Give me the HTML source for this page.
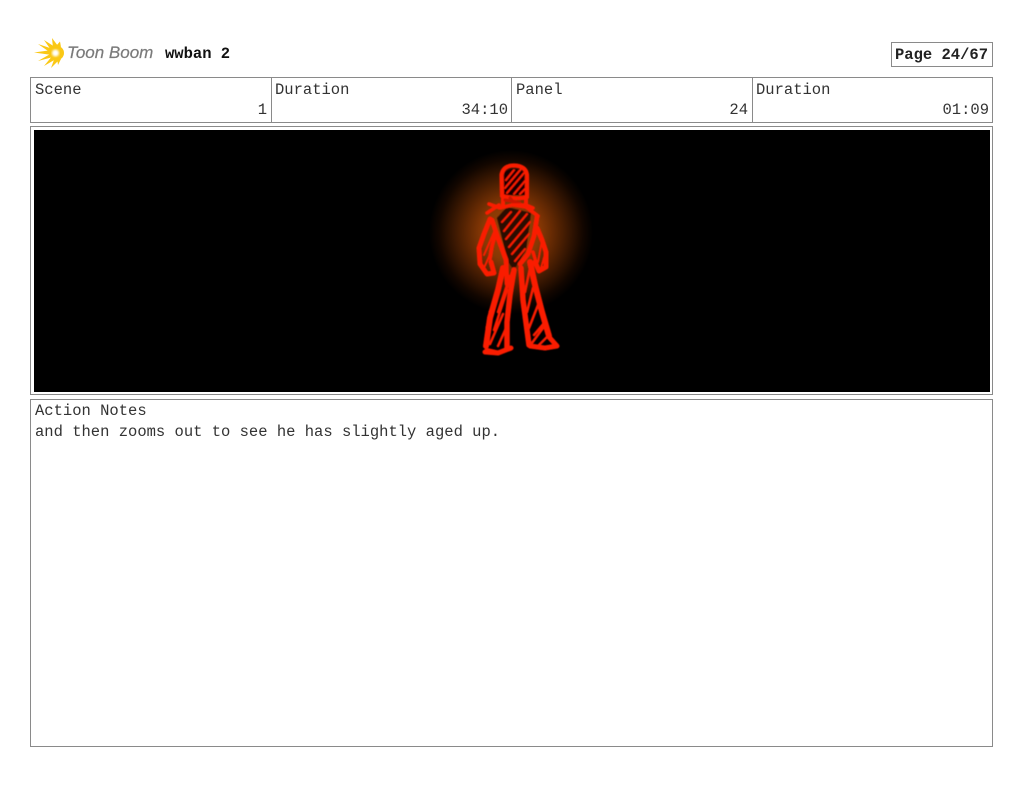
<!DOCTYPE html>
<html>
<head>
<meta charset="utf-8">
<style>
html,body{margin:0;padding:0;background:#fff;}
body{width:1024px;height:793px;position:relative;overflow:hidden;font-family:"Liberation Mono",monospace;color:#333;}
.b{position:absolute;border:1px solid #8a8a8a;box-sizing:border-box;background:#fff;}
.t{position:absolute;font-size:15.5px;line-height:18px;white-space:pre;}
.r{text-align:right;}
</style>
</head>
<body>
<svg style="position:absolute;left:30px;top:36px" width="40" height="34" viewBox="30 36 40 34">
<defs><filter id="lb"><feGaussianBlur stdDeviation="1"/></filter></defs>
<g fill="#fac815">
<path d="M34 52.5L52 50L52 55Z"/>
<path d="M38 44L53 49L51 53Z"/>
<path d="M44 40L55 47L51 50Z"/>
<path d="M52 38L58 46L53 48Z"/>
<path d="M60 41.500L61 47L56 46Z"/>
<path d="M38 61L52 53L53 57Z"/>
<path d="M44 66L53 55L56 59Z"/>
<path d="M51 68L55 57L59 60Z"/>
<path d="M58 65L57 58L61 59Z"/>
</g>
<circle cx="57" cy="53" r="7" fill="#fac815"/>
<circle cx="55.500" cy="53" r="3.500" fill="#fff" filter="url(#lb)"/>
</svg>
<div class="t" style="left:67px;top:44px;font-family:'Liberation Sans',sans-serif;font-style:italic;font-size:17px;color:#7a7a7a;-webkit-text-stroke:0.2px #7a7a7a;">Toon Boom</div>
<div class="t" style="left:165px;top:45px;font-weight:bold;font-size:15.5px;color:#111;">wwban 2</div>

<div class="b" style="left:891px;top:42px;width:102px;height:25px;"></div>
<div class="t" style="left:895px;top:46px;font-weight:bold;color:#222;">Page 24/67</div>

<div class="b" style="left:30px;top:77px;width:963px;height:46px;"></div>
<div style="position:absolute;left:271px;top:77px;width:1px;height:46px;background:#8a8a8a"></div>
<div style="position:absolute;left:511px;top:77px;width:1px;height:46px;background:#8a8a8a"></div>
<div style="position:absolute;left:752px;top:77px;width:1px;height:46px;background:#8a8a8a"></div>
<div class="t" style="left:35px;top:81px;">Scene</div>
<div class="t" style="left:275px;top:81px;">Duration</div>
<div class="t" style="left:516px;top:81px;">Panel</div>
<div class="t" style="left:756px;top:81px;">Duration</div>
<div class="t r" style="left:167px;width:100px;top:101px;">1</div>
<div class="t r" style="left:408px;width:100px;top:101px;">34:10</div>
<div class="t r" style="left:648px;width:100px;top:101px;">24</div>
<div class="t r" style="left:889px;width:100px;top:101px;">01:09</div>

<div class="b" style="left:30px;top:126px;width:963px;height:269px;"></div>
<svg style="position:absolute;left:34px;top:130px" width="956" height="262" viewBox="34 130 956 262">
<defs>
<radialGradient id="g" gradientUnits="userSpaceOnUse" cx="511" cy="232" r="82">
<stop offset="0" stop-color="#a04606"/><stop offset="0.35" stop-color="#873804"/><stop offset="0.65" stop-color="#451c02"/><stop offset="0.88" stop-color="#120600"/><stop offset="1" stop-color="#000"/>
</radialGradient>
<filter id="s" x="-10%" y="-10%" width="120%" height="120%"><feGaussianBlur stdDeviation="0.55"/></filter>
</defs>
<rect x="34" y="130" width="956" height="262" fill="#000"/>
<circle cx="511" cy="232" r="82" fill="url(#g)"/>
<g filter="url(#s)" fill="none" stroke="#fa1e00" stroke-linecap="round" stroke-linejoin="round">
<path stroke="none" fill="#160400" d="M504 172Q514 166 524 172L525 195L504 195Z"/>
<path stroke="none" fill="#2a0a00" d="M497 218L507 207L531 213L526 250L514 270L508 262Z"/>
<path stroke-width="4.200" d="M502 196L501.500 175Q503 165.500 514 165.500Q526 166 527 175L527 197Q518 200 502 196"/>
<path stroke-width="4" d="M503 198L503 206M526 197L526 207"/>
<path stroke-width="3" stroke="#c81400" d="M505 200L520 203M510 198L516 205"/>
<path stroke-width="3.600" d="M489 204L500 208L512 205L526 205L533 208M487 213L499 205M512 205L526 207L538 216"/>
<path stroke-width="4.800" d="M492 220L498 238L506 260L507 284"/>
<path stroke-width="4.800" d="M537 217L534 236L528 254L520 264"/>
<path stroke-width="5" d="M490 219L484 234L479 248L480 264L487 274L494 273L491 262"/>
<path stroke-width="4" d="M496 232L492 246L490 258"/>
<path stroke-width="5" d="M537 228L542 240L546 252L546 267L539 271L535 262"/>
<path stroke-width="3.500" d="M533 252L536 262"/>
<path stroke-width="6" d="M503 268L498 290L490 318L486 346"/>
<path stroke-width="5.500" d="M514 270L510 295L507 322L507 348"/>
<path stroke-width="5" d="M485 352L498 353L511 348"/>
<path stroke-width="2.500" d="M499 352L486 349"/>
<path stroke-width="5.500" d="M521 268L523 300L527 330L529 345"/>
<path stroke-width="6" d="M530 262L535 285L542 312L549 336"/>
<path stroke-width="5" d="M530 346L545 348L557 346L549 337"/>
<path stroke-width="1.300" d="M487 330L484 345M490 312L486 328M495 298L489 312M498 285L494 298M544 325L552 340M540 308L546 322"/>
<g stroke-width="2">
<path d="M506 180L514 170M505 188L521 169M507 193L524 173M514 194L525 181M520 194L525 189"/>
<path d="M502 222L511 212M504 231L520 211M506 239L527 214M509 247L530 222M512 254L529 234M515 261L525 249"/>
<path d="M484 255L494 232M484 268L491 252M538 262L542 240M541 268L545 254"/>
</g>
<g stroke-width="2.600">
<path d="M490 344L503 314M494 330L507 290M498 312L510 276M498 346L507 326M503 300L512 272"/>
<path d="M532 343L543 328M529 328L538 305M527 312L533 288M525 292L530 268M539 345L548 336M534 335L545 322"/>
</g>
</g>
</svg>

<div class="b" style="left:30px;top:399px;width:963px;height:348px;"></div>
<div class="t" style="left:35px;top:402px;">Action Notes</div>
<div class="t" style="left:35px;top:423px;">and then zooms out to see he has slightly aged up.</div>
</body>
</html>
